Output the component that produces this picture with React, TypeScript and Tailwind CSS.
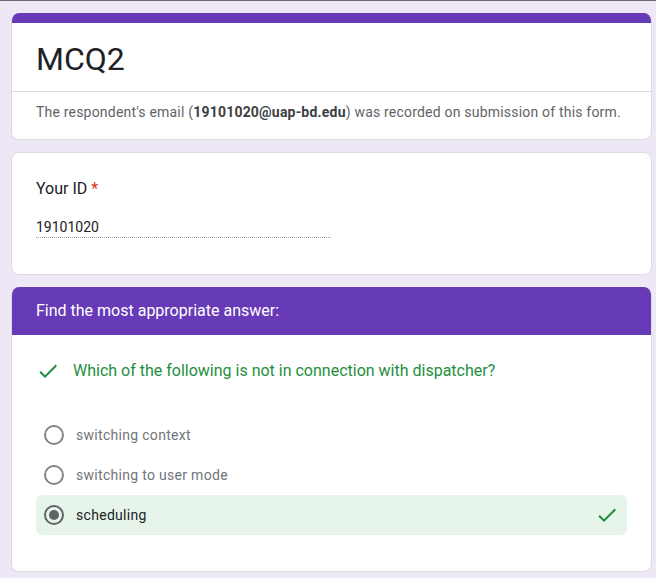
import type { ReactNode } from 'react';

const font = { fontFamily: 'Roboto, "Liberation Sans", Arial, sans-serif' };

function CheckIcon({ className }: { className?: string }) {
  return (
    <svg viewBox="0 0 24 24" width={24} height={24} className={className} fill="currentColor">
      <path d="M9 16.17L4.83 12l-1.42 1.41L9 19 21 7l-1.41-1.41z" />
    </svg>
  );
}

function Card({ children, className = '' }: { children: ReactNode; className?: string }) {
  return (
    <section className={`overflow-hidden rounded-lg border border-[#dadce0] bg-white ${className}`}>
      {children}
    </section>
  );
}

interface OptionProps {
  label: string;
  selected?: boolean;
}

function Option({ label, selected }: OptionProps) {
  return (
    <div
      className={`flex h-10 items-center rounded-md pl-2 pr-2 ${selected ? 'bg-[#e6f4ea]' : ''}`}
    >
      {selected ? (
        <span className="flex h-5 w-5 items-center justify-center rounded-full border-2 border-[#5f6368]">
          <span className="h-2.5 w-2.5 rounded-full bg-[#5f6368]" />
        </span>
      ) : (
        <span className="h-5 w-5 rounded-full border-2 border-[#80868b]" />
      )}
      <span
        className={`ml-3 flex-1 text-sm tracking-[0.3px] ${selected ? 'text-[#202124]' : 'text-[#70757a]'}`}
      >
        {label}
      </span>
      {selected ? <CheckIcon className="text-[#1e8e3e]" /> : null}
    </div>
  );
}

export default function App() {
  return (
    <div className="min-h-[578px] border-t border-[#6b6b6b] bg-[#ede7f6]" style={font}>
      <div className="flex w-[652px] flex-col gap-3 pl-[11px] pt-3 pb-4">
        <Card className="border-t-0">
          <div className="h-2.5 bg-[#673ab7]" />
          <div className="px-6 pt-4 pb-3">
            <h1 className="text-[32px] leading-10 text-[#202124]">MCQ2</h1>
          </div>
          <div className="border-t border-[#dadce0] px-6 pt-2.5 pb-[17px] text-sm leading-5 tracking-[0.2px] text-[#5f6368]">
            The respondent's email (<span className="font-bold text-[#3c4043]">19101020@uap-bd.edu</span>)
            was recorded on submission of this form.
          </div>
        </Card>

        <Card>
          <div className="px-6 pt-6 pb-[36px]">
            <div className="text-base leading-6 text-[#202124]">
              Your ID <span className="text-[#d93025]">*</span>
            </div>
            <div className="mt-4 w-[295px] border-b border-dotted border-[#9aa0a6] text-sm leading-5 text-[#202124]">
              19101020
            </div>
          </div>
        </Card>

        <Card className="border-t-0">
          <div className="flex h-12 items-center bg-[#673ab7] px-6 text-base text-white">
            Find the most appropriate answer:
          </div>
          <div className="px-6 pt-6 pb-[36px]">
            <div className="flex items-center">
              <CheckIcon className="text-[#1e8e3e]" />
              <span className="ml-[13px] text-base leading-6 text-[#1e8e3e]">
                Which of the following is not in connection with dispatcher?
              </span>
            </div>
            <div className="mt-8 flex flex-col">
              <Option label="switching context" />
              <Option label="switching to user mode" />
              <Option label="scheduling" selected />
            </div>
          </div>
        </Card>
      </div>
    </div>
  );
}
